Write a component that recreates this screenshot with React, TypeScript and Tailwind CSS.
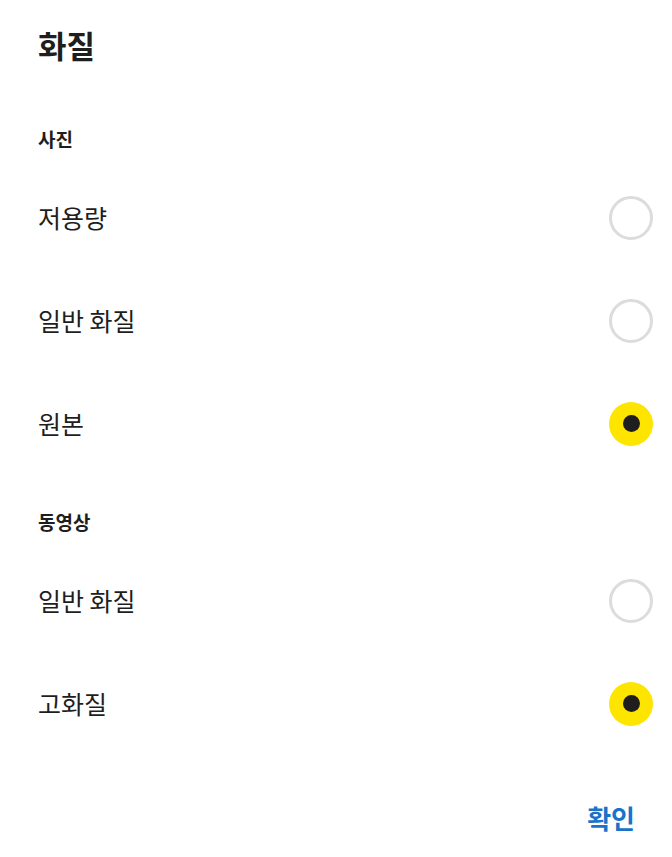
const font = { fontFamily: '"Noto Sans CJK KR", "Noto Sans", sans-serif' };

type Option = { label: string; checked: boolean };

const sections: { title: string; options: Option[] }[] = [
  {
    title: '사진',
    options: [
      { label: '저용량', checked: false },
      { label: '일반 화질', checked: false },
      { label: '원본', checked: true },
    ],
  },
  {
    title: '동영상',
    options: [
      { label: '일반 화질', checked: false },
      { label: '고화질', checked: true },
    ],
  },
];

function Radio({ checked }: { checked: boolean }) {
  if (checked) {
    return (
      <div className="w-[44px] h-[44px] rounded-full bg-[#fee500] flex items-center justify-center">
        <div className="w-[17px] h-[17px] rounded-full bg-[#1e1e1e]" />
      </div>
    );
  }
  return <div className="w-[44px] h-[44px] rounded-full border-[3px] border-[#dcdcdc] bg-white" />;
}

export default function App() {
  return (
    <div className="w-[672px] h-[857px] bg-white text-[#1e1e1e] flex flex-col" style={font}>
      <div className="h-[89px] pl-[38px] flex items-center">
        <h1 className="text-[31px] font-bold leading-none">화질</h1>
      </div>
      {sections.map((s, si) => (
        <div key={si} className={si === 1 ? 'mt-[19px]' : 'mt-[22px]'}>
          <div className="h-[55px] pl-[38px] flex items-center">
            <h2 className="text-[19px] font-bold leading-none">{s.title}</h2>
          </div>
          {s.options.map((o, oi) => (
            <div key={oi} className="h-[103px] pl-[38px] pr-[19px] flex items-center justify-between">
              <span className="text-[25px] leading-none">{o.label}</span>
              <Radio checked={o.checked} />
            </div>
          ))}
        </div>
      ))}
      <div className="flex-1 flex items-center justify-end pr-[37px] pt-[24px]">
        <button className="text-[26px] font-bold text-[#1a73c8] leading-none">확인</button>
      </div>
    </div>
  );
}
